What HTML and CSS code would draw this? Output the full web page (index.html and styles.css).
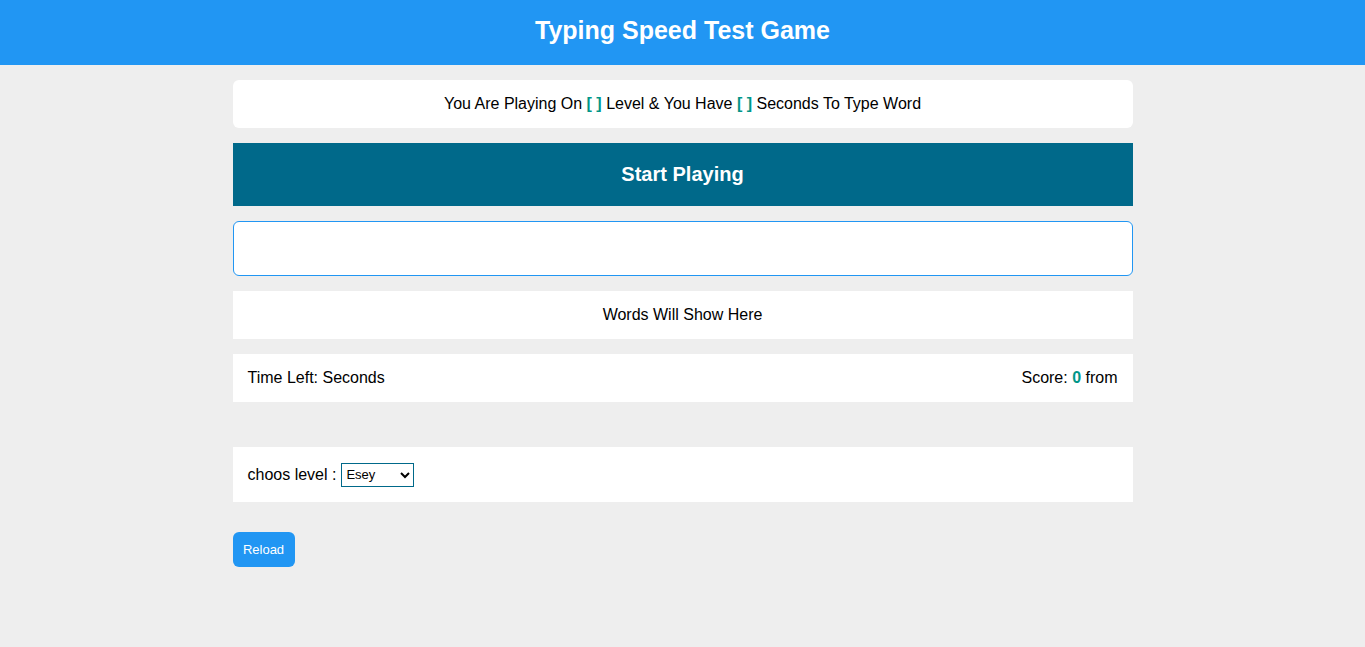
FILE: index.html
```html
<!DOCTYPE html>
<html>
<head>
<meta charset="utf-8">
<title>Typing Speed Test Game</title>
<link rel="stylesheet" href="styles.css">
</head>
<body>
<div class="title">Typing Speed Test Game</div>
<div class="game">
  <div class="message">You Are Playing On <span class="hl">[ ]</span> Level &amp; You Have <span class="hl">[ ]</span> Seconds To Type Word</div>
  <div class="start">Start Playing</div>
  <input class="input" type="text">
  <div class="the-word">Words Will Show Here</div>
  <div class="control">
    <div class="time">Time Left: <span></span>Seconds</div>
    <div class="score">Score: <span class="hl">0</span> from</div>
  </div>
  <div class="level">
    <label>choos level : </label>
    <select class="select"><option>Esey</option><option>Normal</option><option>Hard</option></select>
  </div>
  <button class="reload">Reload</button>
</div>
</body>
</html>
```
FILE: styles.css
```css
* { box-sizing: border-box; }
body {
  margin: 0;
  background: #eeeeee;
  font-family: "Liberation Sans", Arial, sans-serif;
  font-size: 16px;
  color: #000;
}
.title {
  background: #2196f3;
  color: #fff;
  font-weight: bold;
  font-size: 25px;
  text-align: center;
  height: 65px;
  line-height: 61px;
}
.game {
  width: 900px;
  margin: 15px auto 0;
  display: flex;
  flex-direction: column;
}
.message {
  background: #fff;
  border-radius: 6px;
  text-align: center;
  padding: 15px;
  height: 48px;
  line-height: 18px;
}
.hl { color: #009688; font-weight: bold; }
.start {
  margin-top: 15px;
  background: #00698a;
  color: #fff;
  font-weight: bold;
  font-size: 20px;
  text-align: center;
  height: 63px;
  line-height: 63px;
}
.input {
  margin-top: 15px;
  height: 55px;
  border: 1px solid #2196f3;
  border-radius: 6px;
  background: #fff;
  width: 100%;
  outline: none;
}
.the-word {
  margin-top: 15px;
  background: #fff;
  text-align: center;
  height: 48px;
  line-height: 48px;
}
.control {
  margin-top: 15px;
  background: #fff;
  height: 48px;
  padding: 0 15px;
  display: flex;
  justify-content: space-between;
  align-items: center;
}
.level {
  margin-top: 45px;
  background: #fff;
  height: 55px;
  padding: 0 15px;
  display: flex;
  align-items: center;
}
.level label { margin-right: 5px; }
.select {
  width: 73px;
  height: 24px;
  border: 1px solid #00698a;
  border-radius: 0;
  font-family: "Liberation Sans", Arial, sans-serif;
  font-size: 13px;
  background: #fff;
  margin-top: 0;
}
.reload {
  margin-top: 30px;
  align-self: flex-start;
  background: #2196f3;
  color: #fff;
  border: none;
  border-radius: 6px;
  font-family: "Liberation Sans", Arial, sans-serif;
  font-size: 13px;
  width: 62px;
  height: 35px;
  padding: 0;
}
```
